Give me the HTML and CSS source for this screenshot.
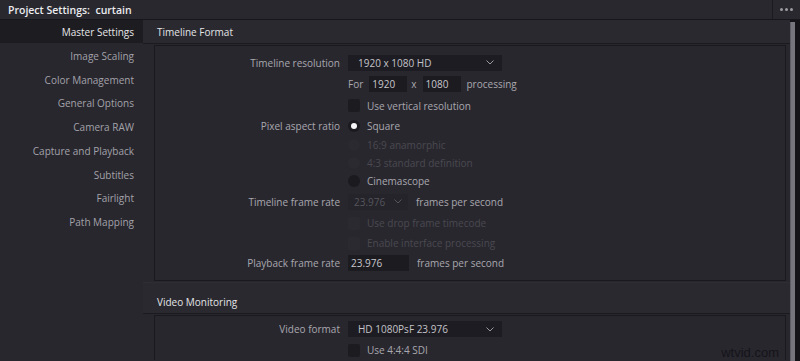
FILE: index.html
```html
<!DOCTYPE html>
<html>
<head>
<meta charset="utf-8">
<link rel="stylesheet" href="styles.css">
</head>
<body>
<div class="app">
  <div class="titlebar">
    <div class="title">Project Settings:&nbsp; curtain</div>
    <div class="more"><span></span><span></span><span></span></div>
  </div>
  <div class="content">
    <nav class="sidebar">
      <div class="nav-item active">Master Settings</div>
      <div class="nav-item">Image Scaling</div>
      <div class="nav-item">Color Management</div>
      <div class="nav-item">General Options</div>
      <div class="nav-item">Camera RAW</div>
      <div class="nav-item">Capture and Playback</div>
      <div class="nav-item">Subtitles</div>
      <div class="nav-item">Fairlight</div>
      <div class="nav-item">Path Mapping</div>
    </nav>
    <main class="main">
      <section class="section first">
        <div class="section-head">Timeline Format</div>
        <div class="box box1">
          <div class="row r1">
            <span class="label">Timeline resolution</span>
            <div class="ctrl">
              <div class="dropdown wide"><span>1920 x 1080 HD</span><svg class="chev" viewBox="0 0 8 5" width="8" height="5"><path d="M0.5 0.5 L4 4 L7.5 0.5" fill="none" stroke="#9a99a0" stroke-width="1"/></svg></div>
            </div>
          </div>
          <div class="row r2">
            <span class="label"></span>
            <div class="ctrl">
              <span class="txt">For</span>
              <div class="input num">1920</div>
              <span class="txt x">x</span>
              <div class="input num">1080</div>
              <span class="txt proc">processing</span>
            </div>
          </div>
          <div class="row r3">
            <span class="label"></span>
            <div class="ctrl"><span class="check"></span><span class="txt">Use vertical resolution</span></div>
          </div>
          <div class="row r4">
            <span class="label">Pixel aspect ratio</span>
            <div class="ctrl"><span class="radio on"></span><span class="txt">Square</span></div>
          </div>
          <div class="row r5 disabled">
            <span class="label"></span>
            <div class="ctrl"><span class="radio"></span><span class="txt">16:9 anamorphic</span></div>
          </div>
          <div class="row r6 disabled">
            <span class="label"></span>
            <div class="ctrl"><span class="radio"></span><span class="txt">4:3 standard definition</span></div>
          </div>
          <div class="row r7">
            <span class="label"></span>
            <div class="ctrl"><span class="radio"></span><span class="txt">Cinemascope</span></div>
          </div>
          <div class="row r8">
            <span class="label">Timeline frame rate</span>
            <div class="ctrl">
              <div class="dropdown small dis"><span>23.976</span><svg class="chev" viewBox="0 0 8 5" width="8" height="5"><path d="M0.5 0.5 L4 4 L7.5 0.5" fill="none" stroke="#55545b" stroke-width="1"/></svg></div>
              <span class="txt fps">frames per second</span>
            </div>
          </div>
          <div class="row r9 disabled">
            <span class="label"></span>
            <div class="ctrl"><span class="check"></span><span class="txt">Use drop frame timecode</span></div>
          </div>
          <div class="row r10 disabled">
            <span class="label"></span>
            <div class="ctrl"><span class="check"></span><span class="txt">Enable interface processing</span></div>
          </div>
          <div class="row r11">
            <span class="label">Playback frame rate</span>
            <div class="ctrl">
              <div class="input rate">23.976</div>
              <span class="txt fps">frames per second</span>
            </div>
          </div>
        </div>
      </section>
      <section class="section second">
        <div class="section-head">Video Monitoring</div>
        <div class="box box2">
          <div class="row r1">
            <span class="label">Video format</span>
            <div class="ctrl">
              <div class="dropdown wide"><span>HD 1080PsF 23.976</span><svg class="chev" viewBox="0 0 8 5" width="8" height="5"><path d="M0.5 0.5 L4 4 L7.5 0.5" fill="none" stroke="#9a99a0" stroke-width="1"/></svg></div>
            </div>
          </div>
          <div class="row r-sdi">
            <span class="label"></span>
            <div class="ctrl"><span class="check"></span><span class="txt">Use 4:4:4 SDI</span></div>
          </div>
        </div>
      </section>
    </main>
    <div class="scrollcol"><div class="thumb"></div></div>
  </div>
  <div class="watermark">wtvid.com</div>
</div>
</body>
</html>
```
FILE: styles.css
```css
* { box-sizing: border-box; }
html, body {
  margin: 0;
  padding: 0;
  width: 800px;
  height: 361px;
  overflow: hidden;
  background: #28272e;
  font-family: "Open Sans", "DejaVu Sans", sans-serif;
  font-size: 10px;
  color: #a9a8ae;
}
.app {
  position: relative;
  width: 800px;
  height: 361px;
  display: flex;
  flex-direction: column;
}
.titlebar {
  height: 20px;
  flex: none;
  display: flex;
  align-items: center;
  background: #29282f;
  border-bottom: 1px solid #17161b;
}
.title {
  flex: 1;
  padding-left: 8px;
  padding-top: 1px;
  font-weight: 600;
  font-size: 10.5px;
  color: #ececee;
}
.more {
  width: 28px;
  height: 19px;
  border-left: 1px solid #1b1a1f;
  display: flex;
  align-items: center;
  justify-content: center;
  gap: 2px;
}
.more span {
  width: 3px;
  height: 3px;
  border-radius: 50%;
  background: #9d9ca3;
}
.content {
  flex: 1;
  display: flex;
  min-height: 0;
}
.sidebar {
  width: 143px;
  flex: none;
  background: #28272e;
}
.nav-item {
  height: 23.75px;
  line-height: 23px;
  padding-top: 1px;
  text-align: right;
  padding-right: 9px;
  color: #a3a2a9;
  white-space: nowrap;
}
.nav-item.active {
  background: #1d1c21;
  color: #e6e6e8;
  height: 23px;
  margin-bottom: 0.75px;
}
.main {
  flex: 1;
  min-width: 0;
  background: #28272e;
}
.section-head {
  height: 24px;
  line-height: 23px;
  padding-left: 14px;
  padding-top: 1px;
  color: #e4e4e6;
  background: #2a2930;
  border-bottom: 1px solid #1b1a1f;
  margin-bottom: 1px;
}
.second {
  margin-top: 1px;
  border-top: 1px solid #2e2d34;
}
.second .section-head {
  height: 31px;
  padding-top: 8px;
}
.box {
  margin-left: 11px;
  margin-right: 4px;
  border: 1px solid #1a191e;
  background: #28272e;
}
.box1 {
  padding-top: 6px;
  padding-bottom: 7px;
}
.box2 {
  padding-top: 2px;
  border-bottom: none;
}
.row {
  display: grid;
  grid-template-columns: 185px auto;
  column-gap: 8px;
  align-items: center;
}
.r1 { height: 21px; }
.r2 { height: 22px; }
.r3 { height: 21px; }
.r4 { height: 20px; }
.r5 { height: 18px; }
.r6 { height: 18px; }
.r7 { height: 18px; }
.r8 { height: 23px; }
.r9 { height: 20px; }
.r10 { height: 20px; }
.r11 { height: 20px; }
.box2 .r1 { height: 22px; }
.r-sdi { height: 20px; }
.label {
  text-align: right;
  white-space: nowrap;
  color: #a9a8ae;
}
.ctrl {
  display: flex;
  align-items: center;
  white-space: nowrap;
}
.txt { color: #a9a8ae; }
.dropdown {
  height: 16px;
  background: #1d1c22;
  display: flex;
  align-items: center;
  justify-content: space-between;
  padding-left: 10px;
  padding-right: 8px;
  color: #c4c3c9;
}
.dropdown.wide { width: 154px; }
.dropdown.small {
  width: 60px;
  padding-left: 6px;
  padding-right: 6px;
}
.dropdown.dis {
  background: #25242a;
  color: #55545b;
}
.input {
  height: 16px;
  background: #1c1b20;
  color: #c8c7cd;
  padding-left: 3px;
  line-height: 16px;
}
.input.num { width: 38px; margin-left: 6px; }
.txt.x { margin-left: 4px; }
.txt.proc { margin-left: 6px; }
.input.rate { width: 61px; }
.txt.fps { margin-left: 8px; }
.check {
  width: 12px;
  height: 13px;
  background: #1c1b20;
  border-radius: 2px;
  margin-right: 7px;
  flex: none;
}
.radio {
  width: 12px;
  height: 12px;
  border-radius: 50%;
  background: #1b1a1f;
  margin-right: 7px;
  flex: none;
  display: flex;
  align-items: center;
  justify-content: center;
}
.radio.on::after {
  content: "";
  width: 6px;
  height: 6px;
  border-radius: 50%;
  background: #f4f4f6;
}
.disabled .txt { color: #4a4950; }
.disabled .check, .disabled .radio { background: #2b2a31; }
.scrollcol {
  width: 10px;
  flex: none;
  display: flex;
  padding-top: 2px;
  background: #141318;
}
.thumb {
  width: 5px;
  background: #76757d;
  border-left: 1px solid #5f5e66;
}
.watermark {
  position: absolute;
  right: 21px;
  bottom: 1px;
  font-family: "Liberation Sans", Arial, sans-serif;
  font-size: 13px;
  color: #15141a;
}
```
